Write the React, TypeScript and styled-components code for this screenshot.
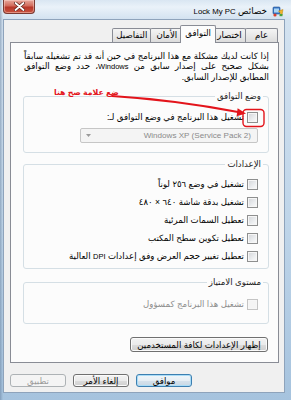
import React from "react";
import styled, { createGlobalStyle, css } from "styled-components";

const FONT = `"Liberation Sans", "DejaVu Sans", sans-serif`;

const Global = createGlobalStyle`
  html, body { margin: 0; padding: 0; background: #fff; }
  body { width: 291px; height: 400px; overflow: hidden; }
  * { box-sizing: border-box; }
`;

const Window = styled.div`
  position: relative;
  width: 291px;
  height: 400px;
  display: flex;
  flex-direction: column;
  padding: 0 6px 7px 3px;
  direction: rtl;
  font-family: ${FONT};
  font-size: 8.6px;
  color: #000;
  background:
    linear-gradient(90deg, rgba(90, 115, 145, 0.45) 0, rgba(90, 115, 145, 0) 3px),
    linear-gradient(to bottom, #d9e6f2 0, #eaf2f9 7px, #d3e2f0 19px, #bfd5e9 55%, #a6c3de 100%);
`;

const Latin = styled.span<{ $size?: number }>`
  font-size: ${(p) => p.$size ?? 7.5}px;
`;

const TitleBar = styled.div`
  height: 20px;
  display: flex;
  align-items: flex-start;
  justify-content: space-between;
`;

const TitleGroup = styled.div`
  display: flex;
  align-items: center;
  gap: 5px;
  height: 13px;
  margin: 4px 1px 0 0;
  font-size: 8.8px;
  white-space: nowrap;
`;

const CloseButton = styled.div`
  width: 32px;
  height: 14px;
  display: flex;
  align-items: center;
  justify-content: center;
  border: 1px solid #7a3b33;
  border-top: none;
  border-radius: 0 0 4px 4px;
  background: linear-gradient(to bottom, #e7a89c 0, #d26b5c 45%, #b8372a 55%, #c9543f 100%);
  box-shadow: inset 0 0 0 1px rgba(255, 220, 210, 0.45);
`;

const Client = styled.div`
  flex: 1;
  display: flex;
  flex-direction: column;
  border: 1px solid #8ea3bb;
  background: #f0f0f0;
  padding: 5px 0 5px 0;
`;

const TabRow = styled.div`
  display: flex;
  align-items: flex-end;
  height: 17px;
  margin: 0 5px 0 6px;
  padding: 0 1px;
`;

const Tab = styled.div<{ $active?: boolean }>`
  min-width: 33px;
  height: 14px;
  line-height: 12px;
  padding: 0 3px;
  margin-left: -1px;
  text-align: center;
  border: 1px solid #898c95;
  border-bottom: none;
  border-radius: 2px 2px 0 0;
  white-space: nowrap;
  background: linear-gradient(to bottom, #f4f4f4 0, #e9e9e9 50%, #dcdcdc 100%);
  ${(p) =>
    p.$active &&
    css`
      position: relative;
      z-index: 1;
      height: 18px;
      line-height: 15px;
      margin: 0 -2px -1px -3px;
      padding: 0 4px;
      background: #fcfcfc;
    `}
`;

const Panel = styled.div`
  margin: 0 5px 0 6px;
  border: 1px solid #898c95;
  background: #fcfcfc;
  padding: 8px 9px 10px 12px;
`;

const Intro = styled.p`
  margin: 0 0 0 1px;
  line-height: 10px;
`;

const IntroLine = styled.span<{ $justify?: boolean }>`
  display: block;
  white-space: nowrap;
  ${(p) =>
    p.$justify &&
    css`
      white-space: normal;
      text-align: justify;
      text-align-last: justify;
    `}
`;

const Group = styled.fieldset<{ $mt: number; $pt: number; $pb: number }>`
  margin: ${(p) => p.$mt}px 0 0 0;
  padding: ${(p) => p.$pt}px 10px ${(p) => p.$pb}px 10px;
  min-width: 0;
  border: 1px solid #d5dfe5;
  border-radius: 3px;
`;

const Legend = styled.legend`
  padding: 0 2px;
  margin-right: -5px;
  line-height: 9px;
  color: #1a1a1a;
`;

const CheckList = styled.div`
  display: flex;
  flex-direction: column;
  gap: 7px;
`;

const CheckRow = styled.div<{ $disabled?: boolean }>`
  display: flex;
  align-items: center;
  gap: 3px;
  height: 11px;
  line-height: 11px;
  white-space: nowrap;
  color: ${(p) => (p.$disabled ? "#8d8d8d" : "#000")};
`;

const Box = styled.span<{ $disabled?: boolean }>`
  flex: none;
  width: 11px;
  height: 11px;
  border: 1px solid ${(p) => (p.$disabled ? "#c4c4c4" : "#8e8f8f")};
  background: ${(p) =>
    p.$disabled
      ? "#f4f4f4"
      : "linear-gradient(135deg, #d2d4d8 0, #eceef0 60%, #fbfbfb 100%)"};
  box-shadow: inset 0 0 0 1px #f6f6f6;
`;

const Select = styled.div`
  width: 178px;
  height: 15px;
  margin-top: 5px;
  display: flex;
  align-items: center;
  justify-content: space-between;
  padding: 0 6px 0 4px;
  border: 1px solid #c6c6c6;
  border-radius: 2px;
  background: #f4f4f4;
  color: #8a8a8a;
  font-size: 8.1px;
  white-space: nowrap;
`;

const Button = styled.div<{ $variant?: "default" | "disabled"; $w: number; $h: number }>`
  width: ${(p) => p.$w}px;
  height: ${(p) => p.$h}px;
  display: flex;
  align-items: center;
  justify-content: center;
  white-space: nowrap;
  border: 1px solid #707070;
  border-radius: 3px;
  background: linear-gradient(to bottom, #f2f2f2 0, #ebebeb 50%, #dddddd 50%, #cfcfcf 100%);
  box-shadow: inset 0 0 0 1px #fbfbfb;
  ${(p) =>
    p.$variant === "default" &&
    css`
      border-color: #3c7fb1;
      box-shadow: inset 0 0 0 1px #a9dcf7;
      background: linear-gradient(to bottom, #f0f6fa 0, #e6eef4 50%, #d6e2ec 50%, #c9d8e4 100%);
    `}
  ${(p) =>
    p.$variant === "disabled" &&
    css`
      border-color: #adb2b5;
      background: #f4f4f4;
      box-shadow: none;
      color: #9a9a9a;
    `}
`;

const AllUsersButton = styled(Button)`
  margin: 13px 1px 0 0;
`;

const ButtonBar = styled.div`
  display: flex;
  justify-content: flex-end;
  gap: 7px;
  margin-top: 11px;
  padding: 0 0 0 6px;
`;

const Overlay = styled.svg`
  position: absolute;
  top: 0;
  left: 0;
  width: 291px;
  height: 400px;
  pointer-events: none;
`;

const Hint = styled.span`
  position: absolute;
  left: 54px;
  top: 87px;
  color: #e3141b;
  font-size: 7.8px;
  font-weight: bold;
  white-space: nowrap;
  line-height: 11px;
`;

const AppIcon = () => (
  <svg width="12" height="12" viewBox="0 0 12 12">
    <rect x="1" y="2" width="7" height="7" rx="1" fill="#3b78c8" stroke="#1f4f8f" strokeWidth="0.6" />
    <rect x="2" y="3.5" width="5" height="4" fill="#a8d4f5" />
    <path d="M6.5 6 L11 4.5 L10 10 Z" fill="#f2b72a" stroke="#b87c10" strokeWidth="0.5" />
    <circle cx="3" cy="10" r="1.6" fill="#d9402e" />
    <rect x="7.5" y="9" width="3" height="2.2" fill="#4aa13c" />
  </svg>
);

const CloseGlyph = () => (
  <svg width="11" height="9" viewBox="0 0 11 9">
    <path d="M1.5 1 L9.5 8 M9.5 1 L1.5 8" stroke="#5a1f18" strokeWidth="3.2" strokeLinecap="round" />
    <path d="M1.5 1 L9.5 8 M9.5 1 L1.5 8" stroke="#ffffff" strokeWidth="1.8" strokeLinecap="round" />
  </svg>
);

const Arrow = () => (
  <svg width="7" height="5" viewBox="0 0 7 5">
    <path d="M1 1 L6 1 L3.5 4 Z" fill="#9a9a9a" />
  </svg>
);

const settings: React.ReactNode[] = [
  "تشغيل في وضع ٢٥٦ لوناً",
  "تشغيل بدقة شاشة ٦٤٠ × ٤٨٠",
  "تعطيل السمات المرئية",
  "تعطيل تكوين سطح المكتب",
  <>
    تعطيل تغيير حجم العرض وفق إعدادات <Latin>DPI</Latin> العالية
  </>,
];

const tabs = ["عام", "اختصار", "التوافق", "الأمان", "التفاصيل"];

export default function App() {
  return (
    <>
      <Global />
      <Window dir="rtl">
        <TitleBar>
          <TitleGroup>
            <AppIcon />
            <span>
              خصائص <Latin $size={7.8}>Lock My PC</Latin>
            </span>
          </TitleGroup>
          <CloseButton>
            <CloseGlyph />
          </CloseButton>
        </TitleBar>
        <Client>
          <TabRow>
            {tabs.map((t) => (
              <Tab key={t} $active={t === "التوافق"}>
                {t}
              </Tab>
            ))}
          </TabRow>
          <Panel>
            <Intro>
              <IntroLine $justify>
                إذا كانت لديك مشكلة مع هذا البرنامج في حين أنه قد تم تشغيله سابقاً
              </IntroLine>
              <IntroLine $justify>
                بشكل صحيح على إصدار سابق من <Latin>Windows</Latin>، حدد وضع التوافق
              </IntroLine>
              <IntroLine>المطابق للإصدار السابق.</IntroLine>
            </Intro>
            <Group $mt={10} $pt={11} $pb={9}>
              <Legend>وضع التوافق</Legend>
              <CheckRow>
                <Box />
                <span>تشغيل هذا البرنامج في وضع التوافق لـ:</span>
              </CheckRow>
              <Select>
                <span>Windows XP (Service Pack 2)</span>
                <Arrow />
              </Select>
            </Group>
            <Group $mt={7} $pt={10} $pb={6}>
              <Legend>الإعدادات</Legend>
              <CheckList>
                {settings.map((s, i) => (
                  <CheckRow key={i}>
                    <Box />
                    <span>{s}</span>
                  </CheckRow>
                ))}
              </CheckList>
            </Group>
            <Group $mt={9} $pt={12} $pb={13}>
              <Legend>مستوى الامتياز</Legend>
              <CheckRow $disabled>
                <Box $disabled />
                <span>تشغيل هذا البرنامج كمسؤول</span>
              </CheckRow>
            </Group>
            <AllUsersButton $w={138} $h={15}>
              إظهار الإعدادات لكافة المستخدمين
            </AllUsersButton>
          </Panel>
          <ButtonBar>
            <Button $variant="default" $w={56} $h={13}>
              موافق
            </Button>
            <Button $w={56} $h={13}>
              إلغاء الأمر
            </Button>
            <Button $variant="disabled" $w={56} $h={13}>
              تطبيق
            </Button>
          </ButtonBar>
        </Client>
        <Hint>ضع علامة صح هنا</Hint>
        <Overlay viewBox="0 0 291 400">
          <path d="M112 96 Q 175 100 238 112" stroke="#e3141b" strokeWidth="2" fill="none" strokeLinecap="round" />
          <path d="M246 113.5 L237.6 108.3 L236.6 116.3 Z" fill="#e3141b" />
          <rect x="243" y="109.5" width="21" height="17" rx="3.5" fill="none" stroke="#e3141b" strokeWidth="1.4" />
        </Overlay>
      </Window>
    </>
  );
}
